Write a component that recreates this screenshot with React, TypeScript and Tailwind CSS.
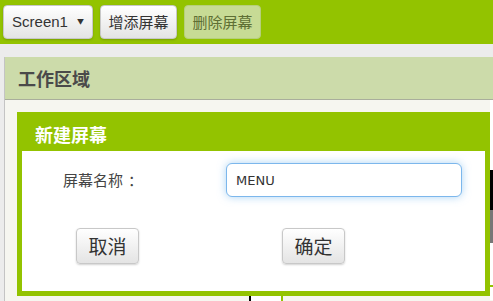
import { useState } from 'react'

const cjk = { fontFamily: '"Noto Sans CJK SC", "Liberation Sans", sans-serif' }
const btn =
  'flex items-center justify-center rounded-[4px] border border-[#c8c8c8] bg-gradient-to-b from-white to-[#e4e4e4] shadow-[0_1px_2px_rgba(0,0,0,0.18)] text-[#333]'

export default function App() {
  const [name, setName] = useState('MENU')

  return (
    <div className="relative w-[493px] h-[301px] overflow-hidden bg-[#ececec]" style={cjk}>
      {/* toolbar */}
      <div className="flex items-center gap-[7px] h-[44px] px-[3px] bg-[#93c300]">
        <div className={`${btn} w-[90px] h-[34px] gap-[9px] text-[15px]`}>
          <span style={{ fontFamily: '"Liberation Sans", sans-serif' }}>Screen1</span>
          <span className="text-[7px] mt-[-2px]">▼</span>
        </div>
        <div className={`${btn} w-[77px] h-[34px] text-[15px]`}>增添屏幕</div>
        <div className="flex items-center justify-center w-[77px] h-[34px] rounded-[4px] border border-[#b6cf7c] bg-[#c7db95] text-[15px] text-[#5e6f34]">
          删除屏幕
        </div>
      </div>

      {/* workspace panel */}
      <div className="mt-[13px] ml-[4px] border-l border-[#c4c4c4] h-[244px] flex flex-col">
        <div className="h-[43px] shrink-0 flex items-center pl-[13px] bg-[#ccdbaa] border-b border-[#a9ae9c] text-[18px] font-bold text-[#4a4a4a]">
          工作区域
        </div>
        <div className="relative flex-1 bg-[#f6f6f0] pl-[12px] pt-[12px]">
          {/* things underneath the dialog */}
          <div className="absolute left-[244px] top-[190px] w-[2px] h-[20px] bg-black" />
          <div className="absolute left-[246px] top-[190px] w-[30px] h-[20px] bg-white" />
          <div className="absolute left-[276px] top-[190px] w-[2px] h-[20px] bg-[#93c300]" />
          <div className="absolute left-[485px] top-[0px] w-[10px] h-[200px] bg-white" />
          <div className="absolute left-[485px] top-[70px] w-[10px] h-[40px] bg-black" />
          <div className="absolute left-[485px] top-[110px] w-[10px] h-[33px] bg-[#777]" />
          <div className="absolute left-[485px] top-[185px] w-[10px] h-[2px] bg-[#93c300]" />

          {/* new screen dialog */}
          <div className="relative w-[473px] h-[184px] border-[5px] border-[#93c300] bg-[#93c300] flex flex-col">
            <div className="h-[34px] shrink-0 flex items-center pl-[13px] text-[18px] font-bold text-white">
              新建屏幕
            </div>
            <div className="flex-1 bg-white">
              <div className="flex items-center pt-[12px]">
                <span className="w-[204px] pl-[41px] text-[15px] text-[#444]">
                  屏幕名称<span className="ml-[5px]">：</span>
                </span>
                <input
                  autoFocus
                  value={name}
                  onChange={e => setName(e.target.value)}
                  className="w-[236px] h-[34px] px-[9px] rounded-[6px] border border-[#7cb7ec] bg-white text-[13px] text-[#333] outline-none shadow-[0_0_8px_rgba(102,175,233,0.55)]"
                  style={{ fontFamily: '"DejaVu Sans", sans-serif' }}
                />
              </div>
              <div className="flex pt-[31px]">
                <div className={`${btn} ml-[54px] w-[63px] h-[36px] text-[19px]`}>取消</div>
                <div className={`${btn} ml-[143px] w-[63px] h-[36px] text-[19px]`}>确定</div>
              </div>
            </div>
          </div>
        </div>
      </div>
    </div>
  )
}
